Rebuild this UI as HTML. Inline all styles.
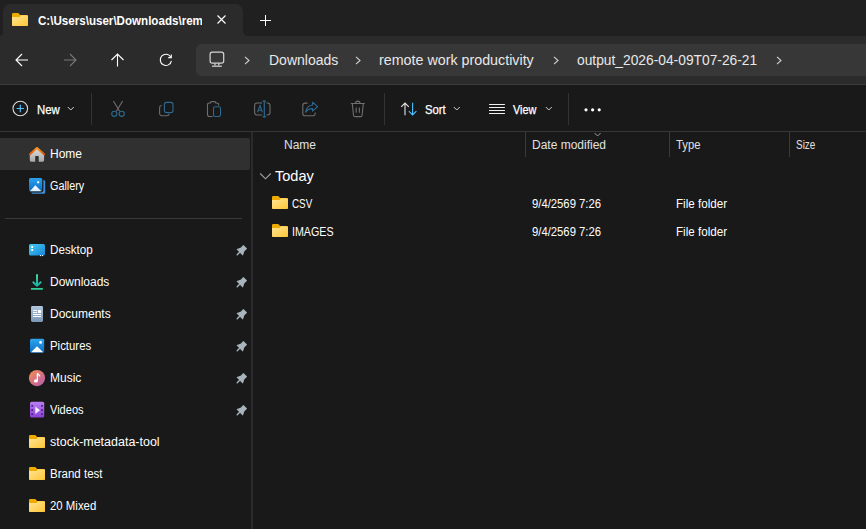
<!DOCTYPE html>
<html><head><meta charset="utf-8">
<style>
*{box-sizing:border-box;margin:0;padding:0}
html,body{width:866px;height:529px;overflow:hidden;background:#191919;font-family:"Liberation Sans",sans-serif;color:#fff}
.a{position:absolute}
.t{position:absolute;white-space:nowrap;line-height:1;font-size:12px}
svg{position:absolute;overflow:visible}
</style></head><body>
<svg width="0" height="0" style="position:absolute">
<defs>
<linearGradient id="fg" x1="0" y1="0" x2="1" y2="1"><stop offset="0" stop-color="#ffe596"/><stop offset="1" stop-color="#ffc635"/></linearGradient>
<symbol id="folder" viewBox="0 0 16 13">
<path d="M0 1.3Q0 0 1.3 0H5.9Q6.5 0 6.9 .45L8.1 2H14.7Q16 2 16 3.3V11.7Q16 13 14.7 13H1.3Q0 13 0 11.7Z" fill="#eeac00"/>
<path d="M0 3.9H7.6L8.7 2.3H14.8Q16 2.3 16 3.5V11.7Q16 13 14.7 13H1.3Q0 13 0 11.7Z" fill="url(#fg)"/>
</symbol>
</defs>
</svg>

<!-- tab strip -->
<div class="a" style="left:0;top:0;width:866px;height:36px;background:#202020"></div>
<div class="a" style="left:0;top:36px;width:866px;height:48px;background:#2b2b2b"></div>
<div class="a" style="left:3px;top:4px;width:240px;height:34px;background:#2b2b2b;border-radius:8px 8px 0 0"></div>
<div class="a" style="left:0;top:28px;width:3px;height:8px;background:#2b2b2b"></div>
<div class="a" style="left:-5px;top:26px;width:8px;height:10px;background:#202020;border-radius:0 0 4px 0"></div>
<div class="a" style="left:243px;top:28px;width:8px;height:8px;background:#2b2b2b"></div>
<div class="a" style="left:243px;top:20px;width:12px;height:16px;background:#202020;border-radius:0 0 0 5px"></div>

<!-- tab content -->
<svg style="left:12px;top:13px" width="16" height="13"><use href="#folder"/></svg>
<div class="a" style="left:38px;top:10px;width:164px;height:20px;overflow:hidden"><span class="t" style="left:0;top:5px;font-weight:700;transform:scaleX(0.966);transform-origin:0 0">C:\Users\user\Downloads\remote work productivity</span></div>
<svg style="left:217px;top:15px" width="9" height="9"><path d="M0.5 .5L8.5 8.5M8.5 .5L.5 8.5" stroke="#fff" stroke-width="1.1"/></svg>
<svg style="left:260px;top:15px" width="11" height="11"><path d="M5.5 0V11M0 5.5H11" stroke="#fff" stroke-width="1"/></svg>

<!-- nav buttons -->
<svg style="left:15px;top:53px" width="14" height="14"><path d="M1 7H13M7 1L1 7L7 13" stroke="#fff" stroke-width="1.1" fill="none"/></svg>
<svg style="left:63px;top:53px" width="14" height="14"><path d="M1 7H13M7 1L13 7L7 13" stroke="#7a7a7a" stroke-width="1.1" fill="none"/></svg>
<svg style="left:111px;top:53px" width="14" height="14"><path d="M6.5 1V13.5M.5 7L6.5 1L12.5 7" stroke="#fff" stroke-width="1.1" fill="none"/></svg>
<svg style="left:159px;top:53px" width="14" height="14"><path d="M11.8 4.2A5.6 5.6 0 1 0 12.4 7.8" stroke="#fff" stroke-width="1.1" fill="none"/><path d="M12.3 1.5V4.6H9.2" stroke="#fff" stroke-width="1.1" fill="none"/></svg>

<!-- address box -->
<div class="a" style="left:196px;top:44px;width:680px;height:32px;background:#373737;border-radius:5px"></div>
<svg style="left:209px;top:51px" width="16" height="16"><rect x="1.1" y="1.1" width="13.6" height="11.1" rx="2.2" stroke="#d6d6d6" stroke-width="1.2" fill="none"/><path d="M6 12.6V14.6M9.8 12.6V14.6" stroke="#d6d6d6" stroke-width="1.2"/><path d="M3 15.2H12.8" stroke="#d6d6d6" stroke-width="1.2"/></svg>
<svg style="left:244px;top:56px" width="7" height="9"><path d="M1 .8L5 4.5L1 8.2" stroke="#d0d0d0" stroke-width="1.1" fill="none"/></svg>
<span class="t" style="left:269px;top:53px;font-size:14px;color:#e8e8e8">Downloads</span>
<svg style="left:355px;top:56px" width="7" height="9"><path d="M1 .8L5 4.5L1 8.2" stroke="#d0d0d0" stroke-width="1.1" fill="none"/></svg>
<span class="t" style="left:379px;top:53px;font-size:14px;color:#e8e8e8;transform:scaleX(1.02);transform-origin:0 0">remote work productivity</span>
<svg style="left:553px;top:56px" width="7" height="9"><path d="M1 .8L5 4.5L1 8.2" stroke="#d0d0d0" stroke-width="1.1" fill="none"/></svg>
<span class="t" style="left:577px;top:53px;font-size:14px;color:#e8e8e8;transform:scaleX(0.985);transform-origin:0 0">output_2026-04-09T07-26-21</span>
<svg style="left:776px;top:56px" width="7" height="9"><path d="M1 .8L5 4.5L1 8.2" stroke="#d0d0d0" stroke-width="1.1" fill="none"/></svg>

<!-- separators -->
<div class="a" style="left:0;top:84px;width:866px;height:1px;background:#3a3a3a"></div>
<div class="a" style="left:0;top:131px;width:866px;height:1px;background:#363636"></div>

<!-- command bar -->
<svg style="left:12px;top:100px" width="17" height="17"><circle cx="8.3" cy="8.5" r="7.3" stroke="#d8d8d8" stroke-width="1.1" fill="none"/><path d="M8.3 4.8V12.2M4.6 8.5H12" stroke="#4cc2ff" stroke-width="1.2"/></svg>
<span class="t" style="left:37px;top:104px;color:#fff;transform:scaleX(0.95);transform-origin:0 0;-webkit-text-stroke:0.25px #fff">New</span>
<svg style="left:67px;top:106px" width="8" height="6"><path d="M.8 1L3.8 4L6.8 1" stroke="#cfcfcf" stroke-width="1" fill="none"/></svg>
<div class="a" style="left:91px;top:93px;width:1px;height:32px;background:#333"></div>

<!-- cut -->
<svg style="left:110px;top:100px" width="16" height="18"><path d="M3.4 1L9.6 11.2M12.6 1L6.4 11.2" stroke="#6e6e6e" stroke-width="1.1"/><circle cx="4.3" cy="13.8" r="2.6" stroke="#2b6a92" stroke-width="1.1" fill="none"/><circle cx="11.7" cy="13.8" r="2.6" stroke="#2b6a92" stroke-width="1.1" fill="none"/></svg>
<!-- copy -->
<svg style="left:158px;top:101px" width="16" height="16"><path d="M3.5 4.3A2.5 2.5 0 0 0 1.6 6.8V12.2A2.6 2.6 0 0 0 4.2 14.8H8.8A2.5 2.5 0 0 0 11.2 12.9" stroke="#6e6e6e" stroke-width="1.1" fill="none"/><rect x="6.4" y="1.4" width="8.6" height="10.2" rx="2.2" stroke="#2b6a92" stroke-width="1.1" fill="none"/></svg>
<!-- paste -->
<svg style="left:206px;top:100px" width="16" height="18"><path d="M6.6 16.5H3.2A1.7 1.7 0 0 1 1.5 14.8V4.7A1.7 1.7 0 0 1 3.2 3H4.4M9.8 3H11A1.7 1.7 0 0 1 12.7 4.7V5.6" stroke="#6e6e6e" stroke-width="1.1" fill="none"/><path d="M4.4 3.4V2.9A1.3 1.3 0 0 1 5.7 1.6H8.5A1.3 1.3 0 0 1 9.8 2.9V3.4" stroke="#6e6e6e" stroke-width="1.1" fill="none"/><rect x="7.5" y="6.7" width="7" height="9.8" rx="1.7" stroke="#2b6a92" stroke-width="1.1" fill="none"/></svg>
<!-- rename -->
<svg style="left:254px;top:100px" width="17" height="18"><path d="M8 3H3A2.5 2.5 0 0 0 .6 5.5V12.5A2.5 2.5 0 0 0 3 15H8M12.5 3H13.5A2.5 2.5 0 0 1 16 5.5V12.5A2.5 2.5 0 0 1 13.5 15H12.5" stroke="#6e6e6e" stroke-width="1.1" fill="none"/><path d="M10.3 1V17M8.6 1.1H12M8.6 16.9H12" stroke="#2b6a92" stroke-width="1.2"/><path d="M3.5 12.2L6 5.6L8.3 12.2M4.3 10.3H7.6" stroke="#2b6a92" stroke-width="1.1" fill="none"/></svg>
<!-- share -->
<svg style="left:302px;top:101px" width="17" height="16"><path d="M5.6 2.1H3.2A2.4 2.4 0 0 0 .8 4.5V12.4A2.4 2.4 0 0 0 3.2 14.8H10.8A2.4 2.4 0 0 0 13.2 12.4V11.6" stroke="#6e6e6e" stroke-width="1.1" fill="none"/><path d="M10.6 1.2L15.6 5.7L10.6 10.2V7.6C7.4 7.6 5.3 8.6 3.6 11.2C4.2 7.4 6.3 4.4 10.6 4Z" stroke="#2b6a92" stroke-width="1.1" fill="none" stroke-linejoin="round"/></svg>
<!-- delete -->
<svg style="left:350px;top:100px" width="16" height="18"><path d="M.8 3.5H14.8M5.6 3.3A2.2 2.2 0 0 1 10 3.3" stroke="#6e6e6e" stroke-width="1.1" fill="none"/><path d="M2.3 3.6L3.5 15.2A1.6 1.6 0 0 0 5.1 16.6H10.5A1.6 1.6 0 0 0 12.1 15.2L13.3 3.6" stroke="#6e6e6e" stroke-width="1.1" fill="none"/><path d="M6.2 7.5V12.8M9.4 7.5V12.8" stroke="#6e6e6e" stroke-width="1.1"/></svg>
<div class="a" style="left:384px;top:93px;width:1px;height:32px;background:#333"></div>

<!-- sort -->
<svg style="left:400px;top:102px" width="18" height="14"><path d="M5 13.2V1M1.2 4.8L5 1L8.8 4.8" stroke="#e6e6e6" stroke-width="1.1" fill="none"/><path d="M12.6 .8V13M8.8 9.2L12.6 13L16.4 9.2" stroke="#4cc2ff" stroke-width="1.1" fill="none"/></svg>
<span class="t" style="left:425px;top:104px;color:#fff;transform:scaleX(0.94);transform-origin:0 0;-webkit-text-stroke:0.25px #fff">Sort</span>
<svg style="left:453px;top:106px" width="8" height="6"><path d="M.8 1L3.8 4L6.8 1" stroke="#cfcfcf" stroke-width="1" fill="none"/></svg>
<!-- view -->
<svg style="left:488px;top:103px" width="18" height="12"><path d="M1.5 1.5H16.5M1.5 4.5H16.5M1.5 7.5H16.5M1.5 10.5H16.5" stroke="#f0f0f0" stroke-width="1.1" stroke-linecap="round"/></svg>
<span class="t" style="left:513px;top:104px;color:#fff;transform:scaleX(0.91);transform-origin:0 0;-webkit-text-stroke:0.25px #fff">View</span>
<svg style="left:545px;top:106px" width="8" height="6"><path d="M.8 1L3.8 4L6.8 1" stroke="#cfcfcf" stroke-width="1" fill="none"/></svg>
<div class="a" style="left:568px;top:93px;width:1px;height:32px;background:#333"></div>
<svg style="left:584px;top:108px" width="18" height="4"><circle cx="2" cy="1.8" r="1.6" fill="#fff"/><circle cx="8.6" cy="1.8" r="1.6" fill="#fff"/><circle cx="15.2" cy="1.8" r="1.6" fill="#fff"/></svg>

<!-- nav pane -->
<div class="a" style="left:0;top:138px;width:250px;height:32px;background:#303030;border-radius:0 2px 2px 0"></div>
<div class="a" style="left:251px;top:132px;width:2px;height:397px;background:#2b2b2b"></div>
<div class="a" style="left:5px;top:218px;width:237px;height:1px;background:#3a3a3a"></div>

<span class="t" style="left:50px;top:148px">Home</span>
<span class="t" style="left:50px;top:180px;transform:scaleX(0.9);transform-origin:0 0">Gallery</span>
<span class="t" style="left:50px;top:244px;transform:scaleX(0.97);transform-origin:0 0">Desktop</span>
<span class="t" style="left:50px;top:276px">Downloads</span>
<span class="t" style="left:50px;top:308px">Documents</span>
<span class="t" style="left:50px;top:340px;transform:scaleX(0.95);transform-origin:0 0">Pictures</span>
<span class="t" style="left:50px;top:372px">Music</span>
<span class="t" style="left:50px;top:404px;transform:scaleX(0.92);transform-origin:0 0">Videos</span>
<span class="t" style="left:50px;top:436px;transform:scaleX(1.04);transform-origin:0 0">stock-metadata-tool</span>
<span class="t" style="left:50px;top:468px;transform:scaleX(0.96);transform-origin:0 0">Brand test</span>
<span class="t" style="left:50px;top:500px;transform:scaleX(0.95);transform-origin:0 0">20 Mixed</span>

<svg style="left:29px;top:435px" width="16" height="13"><use href="#folder"/></svg>
<svg style="left:29px;top:467px" width="16" height="13"><use href="#folder"/></svg>
<svg style="left:29px;top:499px" width="16" height="13"><use href="#folder"/></svg>

<!-- nav icons -->
<svg style="left:28px;top:146px" width="18" height="17"><defs><linearGradient id="hb" x1="0" y1="0" x2="0" y2="1"><stop offset="0" stop-color="#dcdcdc"/><stop offset="1" stop-color="#a8a8a8"/></linearGradient><linearGradient id="hr" x1="0" y1="0" x2="0" y2="1"><stop offset="0" stop-color="#ff9a1f"/><stop offset="1" stop-color="#e0580a"/></linearGradient></defs>
<path d="M1.8 8.4L9 2.6L16.1 8.4V14.3A1.4 1.4 0 0 1 14.7 15.7H10.7V10.7A.6.6 0 0 0 10.1 10.1H7.8A.6.6 0 0 0 7.2 10.7V15.7H3.2A1.4 1.4 0 0 1 1.8 14.3Z" fill="url(#hb)"/>
<path d="M1.9 8.2L9 2.1L16.1 8.2" stroke="url(#hr)" stroke-width="2" fill="none" stroke-linecap="round" stroke-linejoin="round"/></svg>

<svg style="left:29px;top:177px" width="17" height="17"><defs><linearGradient id="gb" x1="0" y1="0" x2="0" y2="1"><stop offset="0" stop-color="#2aa3ee"/><stop offset="1" stop-color="#0b6ac4"/></linearGradient><linearGradient id="gm" x1="0" y1="0" x2="0" y2="1"><stop offset="0" stop-color="#ffffff"/><stop offset="1" stop-color="#d6ecfb"/></linearGradient></defs>
<rect x="2.4" y="3" width="13.8" height="13.8" rx="1.6" fill="#3d8fdc"/>
<rect x="-1.4" y="-0.4" width="15.8" height="15.8" rx="2.4" fill="#191919"/>
<rect x="0" y="1" width="13.2" height="13.3" rx="1.5" fill="url(#gb)"/>
<path d="M0.9 14.3L6.3 8.3L12.3 14.3Z" fill="url(#gm)"/>
<rect x="8.1" y="4.2" width="2.1" height="2.1" rx=".6" fill="#fff"/></svg>

<svg style="left:29px;top:244px" width="16" height="13"><defs><linearGradient id="db" x1="0" y1="0" x2="1" y2="1"><stop offset="0" stop-color="#42cdf0"/><stop offset="1" stop-color="#1783d6"/></linearGradient></defs>
<rect x="0" y="0" width="16" height="11.6" rx="1.6" fill="url(#db)"/>
<rect x="2.2" y="2.1" width="1.9" height="1.9" rx=".4" fill="#fff"/><rect x="2.2" y="5.1" width="1.9" height="1.9" rx=".4" fill="#fff"/>
<rect x="11" y="11" width="1.1" height="1.1" fill="#dfeffb"/><rect x="13" y="11" width="1.1" height="1.1" fill="#dfeffb"/></svg>

<svg style="left:30px;top:273px" width="14" height="18"><defs><linearGradient id="dl" x1="0" y1="0" x2="0" y2="1"><stop offset="0" stop-color="#48dda6"/><stop offset="1" stop-color="#18b0a4"/></linearGradient></defs>
<path d="M7 1.9V12.8M3.3 9.3L7 12.9L10.7 9.3" stroke="url(#dl)" stroke-width="1.9" fill="none" stroke-linecap="round" stroke-linejoin="round"/>
<rect x="0.9" y="15" width="12" height="1.8" rx=".5" fill="#2fcf9c"/></svg>

<svg style="left:30px;top:306px" width="14" height="17"><defs><linearGradient id="dc" x1="0" y1="0" x2="0" y2="1"><stop offset="0" stop-color="#b1c6dc"/><stop offset="1" stop-color="#7c97b5"/></linearGradient></defs>
<rect x="1" y="0" width="12" height="16" rx="1.4" fill="url(#dc)"/>
<rect x="3" y="4" width="4" height="1" fill="#fff"/><rect x="3" y="6" width="4" height="1" fill="#fff"/>
<rect x="8" y="4" width="3" height="3" fill="#fff"/>
<rect x="3" y="8" width="8" height="1" fill="#fff"/><rect x="3" y="10" width="8" height="1" fill="#fff"/></svg>

<svg style="left:30px;top:338px" width="15" height="15"><defs><linearGradient id="pc" x1="0" y1="0" x2="0" y2="1"><stop offset="0" stop-color="#2ca6ee"/><stop offset="1" stop-color="#0a6cc4"/></linearGradient></defs>
<rect x="0" y="0.8" width="14.2" height="14" rx="1.5" fill="url(#pc)"/>
<path d="M1 14.2L7 8.2L13.2 14.2Z" fill="#fff"/>
<circle cx="10.6" cy="4.4" r="1.4" fill="#fff"/></svg>

<svg style="left:28px;top:369px" width="18" height="18"><defs><linearGradient id="mc" x1="0" y1="0" x2="1" y2="1"><stop offset="0" stop-color="#f5904a"/><stop offset="1" stop-color="#b658b6"/></linearGradient></defs>
<circle cx="9" cy="9.1" r="8.1" fill="url(#mc)"/>
<path d="M9.4 4.2V11.6" stroke="#fff" stroke-width="1.3"/><path d="M9.4 4.2C10 5.6 11.8 5.8 11.8 7.6" stroke="#fff" stroke-width="1.2" fill="none"/>
<ellipse cx="7.9" cy="11.9" rx="2" ry="1.7" fill="#fff"/></svg>

<svg style="left:30px;top:401px" width="15" height="17"><defs><linearGradient id="vc" x1="0" y1="0" x2="0" y2="1"><stop offset="0" stop-color="#b97ef2"/><stop offset="1" stop-color="#8a40d8"/></linearGradient></defs>
<rect x="0" y="0.8" width="14.2" height="15.8" rx="1.5" fill="url(#vc)"/>
<rect x="1.3" y="3.9" width="1.8" height="1.8" rx=".3" fill="#4a2585"/><rect x="1.3" y="8.1" width="1.8" height="1.8" rx=".3" fill="#4a2585"/><rect x="1.3" y="12.2" width="1.8" height="1.8" rx=".3" fill="#4a2585"/>
<rect x="11.1" y="3.9" width="1.8" height="1.8" rx=".3" fill="#4a2585"/><rect x="11.1" y="8.1" width="1.8" height="1.8" rx=".3" fill="#4a2585"/><rect x="11.1" y="12.2" width="1.8" height="1.8" rx=".3" fill="#4a2585"/>
<path d="M5.3 5.6L10 9.3L5.3 13Z" fill="#f4ecfb"/></svg>

<!-- pins -->
<svg width="0" height="0" style="position:absolute"><symbol id="pin" viewBox="0 0 12 12"><g transform="rotate(45 6 6)"><path d="M3.4 0H8.6V4L10.4 7.4Q10.6 8 10 8H2Q1.4 8 1.6 7.4L3.4 4Z" fill="#a9b3ba"/><path d="M6 7.5V11.4" stroke="#a9b3ba" stroke-width="1.4" stroke-linecap="round"/></g></symbol></svg>
<svg style="left:235px;top:245px" width="12" height="12"><use href="#pin"/></svg>
<svg style="left:235px;top:277px" width="12" height="12"><use href="#pin"/></svg>
<svg style="left:235px;top:309px" width="12" height="12"><use href="#pin"/></svg>
<svg style="left:235px;top:341px" width="12" height="12"><use href="#pin"/></svg>
<svg style="left:235px;top:373px" width="12" height="12"><use href="#pin"/></svg>
<svg style="left:235px;top:405px" width="12" height="12"><use href="#pin"/></svg>

<!-- content -->
<span class="t" style="left:284px;top:139px;color:#e0e0e0">Name</span>
<div class="a" style="left:525px;top:132px;width:1px;height:25px;background:#3a3a3a"></div>
<svg style="left:594px;top:132px" width="8" height="6"><path d="M.6 1L3.6 4L6.6 1" stroke="#9a9a9a" stroke-width="1" fill="none"/></svg>
<span class="t" style="left:532px;top:139px;color:#e0e0e0">Date modified</span>
<div class="a" style="left:669px;top:132px;width:1px;height:25px;background:#3a3a3a"></div>
<span class="t" style="left:676px;top:139px;color:#e0e0e0;transform:scaleX(0.94);transform-origin:0 0">Type</span>
<div class="a" style="left:789px;top:132px;width:1px;height:25px;background:#3a3a3a"></div>
<span class="t" style="left:796px;top:139px;color:#e0e0e0;transform:scaleX(0.83);transform-origin:0 0">Size</span>

<svg style="left:259px;top:172px" width="13" height="9"><path d="M1.2 1.5L6.5 6.8L11.8 1.5" stroke="#a0a0a0" stroke-width="1.1" fill="none"/></svg>
<span class="t" style="left:275px;top:168px;font-size:15px;transform:scaleX(0.97);transform-origin:0 0">Today</span>

<svg style="left:272px;top:196px" width="16" height="13"><use href="#folder"/></svg>
<span class="t" style="left:292px;top:198px;transform:scaleX(0.82);transform-origin:0 0">CSV</span>
<span class="t" style="left:532px;top:198px;transform:scaleX(0.94);transform-origin:0 0">9/4/2569 7:26</span>
<span class="t" style="left:676px;top:198px;transform:scaleX(0.97);transform-origin:0 0">File folder</span>
<svg style="left:272px;top:224px" width="16" height="13"><use href="#folder"/></svg>
<span class="t" style="left:292px;top:226px;transform:scaleX(0.89);transform-origin:0 0">IMAGES</span>
<span class="t" style="left:532px;top:226px;transform:scaleX(0.94);transform-origin:0 0">9/4/2569 7:26</span>
<span class="t" style="left:676px;top:226px;transform:scaleX(0.97);transform-origin:0 0">File folder</span>

</body></html>
